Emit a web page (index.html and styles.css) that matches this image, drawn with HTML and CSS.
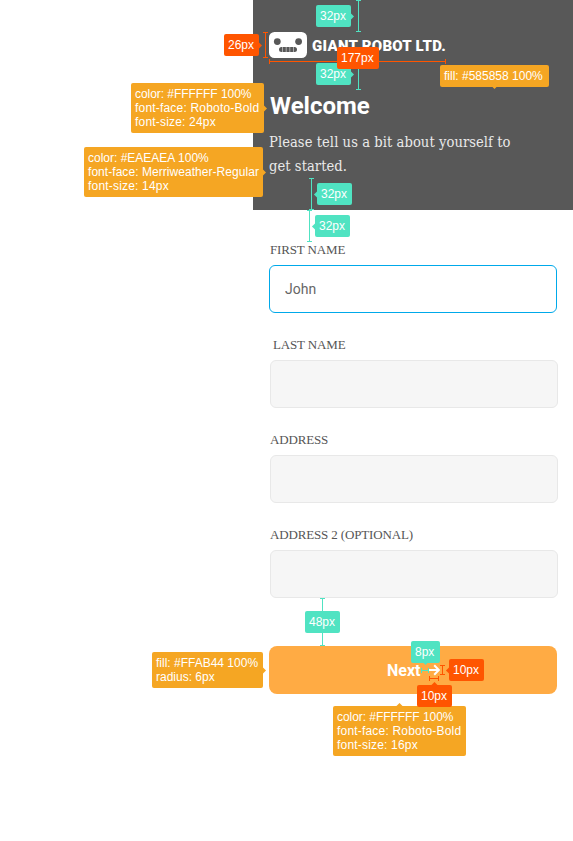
FILE: index.html
```html
<!DOCTYPE html>
<html lang="en">
<head>
<meta charset="utf-8">
<title>Giant Robot Ltd. – Welcome</title>
<link rel="stylesheet" href="styles.css">
</head>
<body>
<main class="screen">
  <header class="header">
    <div class="brand">
      <svg class="logo" width="38" height="26" viewBox="0 0 38 26">
        <rect width="38" height="26" rx="5.500" fill="#fff"/>
        <circle cx="8.300" cy="9.600" r="3.400" fill="#585858"/>
        <circle cx="29.600" cy="9.600" r="3.400" fill="#585858"/>
        <path d="M12.500 15h13a2.500 2.500 0 0 1 0 5h-13a2.500 2.500 0 0 1 0-5z" fill="#585858"/>
        <path d="M13.500 15v5M17.200 15v5M20.800 15v5M24.500 15v5" stroke="#fff" stroke-width=".5"/>
      </svg>
      <span class="brand-name">GIANT ROBOT LTD.</span>
    </div>
    <h1 class="title">Welcome</h1>
    <p class="intro">Please tell us a bit about yourself to<br>get started.</p>
  </header>
  <form class="form">
    <div class="field"><label class="label" for="first">FIRST NAME</label><input class="input active" id="first" value="John"></div>
    <div class="field"><label class="label last" for="last">LAST NAME</label><input class="input" id="last"></div>
    <div class="field"><label class="label" for="address">ADDRESS</label><input class="input" id="address"></div>
    <div class="field"><label class="label" for="address2">ADDRESS 2 (OPTIONAL)</label><input class="input" id="address2"></div>
    <button class="button" type="button"><span class="next">Next</span><svg width="11" height="12" viewBox="0 0 11 12"><path d="M0 6h9.500M5.200 1.300 9.900 6l-4.700 4.700" fill="none" stroke="#fff" stroke-width="2"/></svg></button>
  </form>
</main>

<div class="v gap v-top"></div>
<div class="v gap v-logo"></div>
<div class="v gap v-intro"></div>
<div class="v gap v-form"></div>
<div class="v gap v-button"></div>
<div class="v size v-mark"></div>
<div class="v size v-arrow"></div>
<div class="h size h-logo"></div>
<div class="h gap h-next"></div>
<div class="h size h-arrow"></div>

<div class="tag gap right t-top">32px</div>
<div class="tag size right t-mark">26px</div>
<div class="tag gap right t-logo">32px</div>
<div class="tag size t-width">177px</div>
<div class="tag note down t-fill">fill: #585858 100%</div>
<div class="tag note right t-title"><span class="tight">color: #FFFFFF 100%</span><br><span class="wide">font-face: Roboto-Bold<br>font-size: 24px</span></div>
<div class="tag note right t-intro">color: #EAEAEA 100%<br><span class="snug">font-face: Merriweather-Regular</span><br><span class="wide">font-size: 14px</span></div>
<div class="tag gap left t-end">32px</div>
<div class="tag gap left t-form">32px</div>
<div class="tag gap t-space">48px</div>
<div class="tag note right t-button">fill: #FFAB44 100%<br>radius: 6px</div>
<div class="tag gap down t-eight">8px</div>
<div class="tag size left t-ten">10px</div>
<div class="tag note up t-next"><span class="tight">color: #FFFFFF 100%</span><br><span class="wide">font-face: Roboto-Bold<br>font-size: 16px</span></div>
<div class="tag size up t-ten-low">10px</div>
</body>
</html>
```
FILE: styles.css
```css
* { box-sizing: border-box; }
body { margin: 0; width: 573px; height: 841px; position: relative; overflow: hidden; background: #fff; }
.screen { width: 320px; margin-left: auto; }
.header { height: 210px; padding: 32px 16px 0; background: #585858; }
.brand { display: flex; align-items: center; gap: 5px; height: 26px; }
.logo { display: block; flex: none; }
.brand-name { padding-top: 1px; font: 900 15px/26px Roboto, sans-serif; letter-spacing: .26px; color: #fff; white-space: nowrap; }
.title { margin: 32px 0 0 1px; font: 700 24px/32px Roboto, sans-serif; color: #fff; }
.intro { margin: 8px 0 0; font: 14.6px/24px "DejaVu Serif Condensed", "DejaVu Serif", serif; font-stretch: condensed; letter-spacing: .06px; color: #eaeaea; white-space: nowrap; }
.form { padding: 32px 16px 0; }
.field { height: 71px; margin-bottom: 24px; }
.label { display: block; height: 23px; font: 13px/16px "Liberation Serif", serif; letter-spacing: -.15px; color: #555; padding-left: 1px; white-space: nowrap; }
.label.last { padding-left: 4px; }
.input { display: block; width: 288px; height: 48px; margin-left: 1px; padding: 0 15px; border: 1px solid #e8e8e8; border-radius: 6px; background: #f6f6f6; font: 14px Roboto, sans-serif; color: #666; outline: 0; }
.input.active { margin-left: 0; border-color: #00a9ea; background: #fff; }
.button { display: flex; align-items: center; width: 288px; height: 48px; margin-top: 48px; padding: 0 0 0 118px; border: 0; border-radius: 8px; background: #ffab44; font: 700 16px Roboto, sans-serif; color: #fff; }
.next { width: 42px; text-align: left; }

.gap { --c: #50e3c2; }
.size { --c: #ff5500; }
.note { --c: #f5a623; }
.tag { position: absolute; padding: 4px; border-radius: 2px; background: var(--c); color: #fff; font: 12px/14px "Liberation Sans", Arial, sans-serif; white-space: nowrap; }
.tag::before { position: absolute; width: 5px; height: 5px; background: var(--c); transform: rotate(45deg); }
.right::before { content: ""; right: -2px; top: calc(50% - 2.5px); }
.left::before { content: ""; left: -2px; top: calc(50% - 2.5px); }
.up::before { content: ""; top: -2px; left: calc(50% - 2.5px); }
.down::before { content: ""; bottom: -1px; left: calc(50% - 2.5px); }
.wide { letter-spacing: .19px; }
.snug { letter-spacing: .05px; }
.tight { letter-spacing: -.05px; }
.v { position: absolute; width: 5px; border: solid var(--c); border-width: 1px 0; background: linear-gradient(var(--c), var(--c)) center / 1px 100% no-repeat; }
.h { position: absolute; height: 5px; border: solid var(--c); border-width: 0 1px; background: linear-gradient(var(--c), var(--c)) center / 100% 1px no-repeat; }

.v-top { left: 356px; top: 0; height: 32px; }
.v-logo { left: 356px; top: 58px; height: 32px; }
.v-intro { left: 309px; top: 178px; height: 32px; }
.v-form { left: 307px; top: 210px; height: 32px; }
.v-button { left: 320px; top: 598px; height: 48px; }
.v-mark { left: 263px; top: 32px; height: 26px; }
.v-arrow { left: 440px; top: 665px; height: 10px; }
.h-logo { left: 269px; top: 59px; width: 177px; }
.h-next { left: 421px; top: 668px; width: 8px; }
.h-arrow { left: 429px; top: 676px; width: 10px; }

.t-top { left: 316px; top: 5px; width: 35px; }
.t-mark { left: 224px; top: 34px; width: 35px; }
.t-logo { left: 316px; top: 63px; width: 35px; }
.t-width { left: 337px; top: 47px; width: 42px; }
.t-fill { left: 440px; top: 65px; width: 109px; }
.t-title { left: 131px; top: 83px; width: 133px; }
.t-intro { left: 84px; top: 147px; width: 179px; }
.t-end { left: 317px; top: 183px; width: 35px; }
.t-form { left: 315px; top: 215px; width: 35px; }
.t-space { left: 305px; top: 611px; width: 35px; }
.t-button { left: 152px; top: 652px; width: 111px; }
.t-eight { left: 411px; top: 641px; width: 29px; }
.t-ten { left: 449px; top: 659px; width: 35px; }
.t-next { left: 333px; top: 706px; width: 133px; }
.t-ten-low { left: 417px; top: 685px; width: 35px; }
```
